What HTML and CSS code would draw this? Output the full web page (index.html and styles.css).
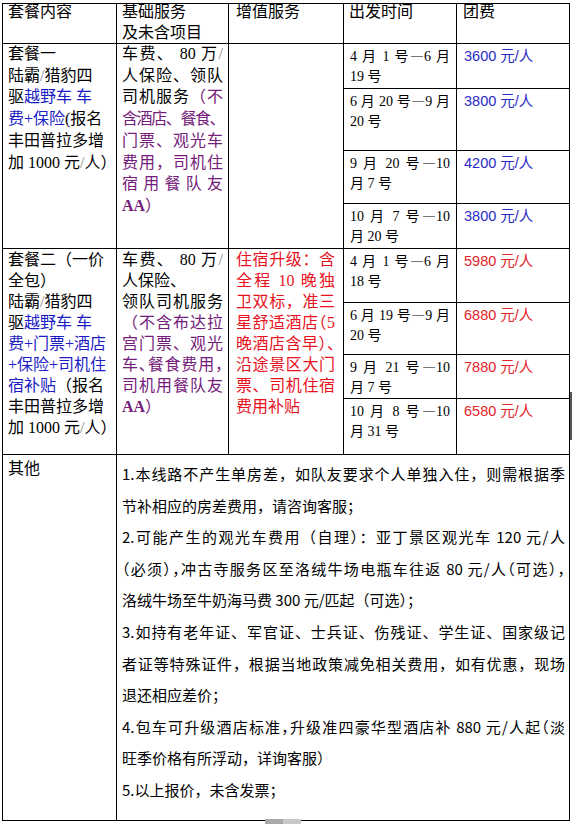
FILE: index.html
```html
<!DOCTYPE html>
<html lang="zh-CN">
<head>
<meta charset="utf-8">
<title>套餐价格表</title>
<link rel="stylesheet" href="styles.css">
</head>
<body>
<div class="page">
<table class="plan">
  <colgroup>
    <col class="c1"><col class="c2"><col class="c3"><col class="c4"><col class="c5">
  </colgroup>
  <tr class="h-head">
    <td class="txt head"><span class="l">套餐内容</span></td>
    <td class="txt head"><span class="l">基础服务</span><span class="l">及未含项目</span></td>
    <td class="txt head pad3"><span class="l">增值服务</span></td>
    <td class="txt head"><span class="l">出发时间</span></td>
    <td class="txt head pad5"><span class="l">团费</span></td>
  </tr>

  <tr class="h45">
    <td class="txt r1" rowspan="4">
      <span class="l">套餐一</span>
      <span class="l">陆霸<span class="sl">/</span>猎豹四</span>
      <span class="l">驱<span class="blue">越野车 车</span></span>
      <span class="l"><span class="blue">费+保险</span>(报名</span>
      <span class="l">丰田普拉多增</span>
      <span class="l">加 1000 元<span class="sl">/</span>人）</span>
    </td>
    <td class="txt r1" rowspan="4">
      <span class="l j">车费、 80 万<span class="sl">/</span></span>
      <span class="l j">人保险、领队</span>
      <span class="l j">司机服务<span class="purple">（不</span></span>
      <span class="l purple tight">含酒店、餐食、</span>
      <span class="l j purple">门票、观光车</span>
      <span class="l j purple">费用，司机住</span>
      <span class="l j purple">宿用餐队友</span>
      <span class="l purple"><b class="aa">AA</b>）</span>
    </td>
    <td class="txt pad3" rowspan="4"></td>
    <td class="date"><span class="l j">4 月 1 号<span class="dash">—</span>6 月</span><span class="l">19 号</span></td>
    <td class="price blue2">3600 元/人</td>
  </tr>
  <tr class="h62">
    <td class="date"><span class="l j">6 月 20 号<span class="dash">—</span>9 月</span><span class="l">20 号</span></td>
    <td class="price blue2">3800 元/人</td>
  </tr>
  <tr class="h53">
    <td class="date"><span class="l j">9 月 20 号<span class="dash">—</span>10</span><span class="l">月 7 号</span></td>
    <td class="price blue2">4200 元/人</td>
  </tr>
  <tr class="h45">
    <td class="date"><span class="l j">10 月 7 号<span class="dash">—</span>10</span><span class="l">月 20 号</span></td>
    <td class="price blue2">3800 元/人</td>
  </tr>

  <tr class="h54">
    <td class="txt r2" rowspan="4">
      <span class="l">套餐二（一价</span>
      <span class="l">全包）</span>
      <span class="l">陆霸<span class="sl">/</span>猎豹四</span>
      <span class="l">驱<span class="blue">越野车 车</span></span>
      <span class="l blue">费+门票+酒店</span>
      <span class="l blue">+保险+司机住</span>
      <span class="l"><span class="blue">宿补贴</span>（报名</span>
      <span class="l">丰田普拉多增</span>
      <span class="l">加 1000 元<span class="sl">/</span>人）</span>
    </td>
    <td class="txt r2" rowspan="4">
      <span class="l j">车费、 80 万<span class="sl">/</span></span>
      <span class="l">人保险、</span>
      <span class="l j">领队司机服务</span>
      <span class="l j purple">（不含布达拉</span>
      <span class="l j purple">宫门票、观光</span>
      <span class="l j purple halt">车、餐食费用，</span>
      <span class="l j purple">司机用餐队友</span>
      <span class="l purple"><b class="aa">AA</b>）</span>
    </td>
    <td class="txt r2 pad3 red" rowspan="4">
      <span class="l j">住宿升级：含</span>
      <span class="l j">全程 10 晚独</span>
      <span class="l j">卫双标，准三</span>
      <span class="l j halt">星舒适酒店（5</span>
      <span class="l j halt">晚酒店含早）、</span>
      <span class="l j">沿途景区大门</span>
      <span class="l j">票、司机住宿</span>
      <span class="l">费用补贴</span>
    </td>
    <td class="date"><span class="l j">4 月 1 号<span class="dash">—</span>6 月</span><span class="l">18 号</span></td>
    <td class="price red2">5980 元/人</td>
  </tr>
  <tr class="h52">
    <td class="date"><span class="l j">6 月 19 号<span class="dash">—</span>9 月</span><span class="l">20 号</span></td>
    <td class="price red2">6880 元/人</td>
  </tr>
  <tr class="h42">
    <td class="date"><span class="l j">9 月 21 号<span class="dash">—</span>10</span><span class="l">月 7 号</span></td>
    <td class="price red2">7880 元/人</td>
  </tr>
  <tr class="h56">
    <td class="date"><span class="l j">10 月 8 号<span class="dash">—</span>10</span><span class="l">月 31 号</span></td>
    <td class="price red2">6580 元/人</td>
  </tr>

  <tr class="h-other">
    <td class="txt other-label"><span class="l">其他</span></td>
    <td class="notes" colspan="4">
      <span class="l j">1.本线路不产生单房差，如队友要求个人单独入住，则需根据季</span>
      <span class="l">节补相应的房差费用，请咨询客服；</span>
      <span class="l j">2.可能产生的观光车费用（自理）：亚丁景区观光车 120 元/人</span>
      <span class="l j halt">（必须），冲古寺服务区至洛绒牛场电瓶车往返 80 元/人（可选），</span>
      <span class="l">洛绒牛场至牛奶海马费 300 元/匹起（可选）；</span>
      <span class="l j">3.如持有老年证、军官证、士兵证、伤残证、学生证、国家级记</span>
      <span class="l j">者证等特殊证件，根据当地政策减免相关费用，如有优惠，现场</span>
      <span class="l">退还相应差价；</span>
      <span class="l j halt">4.包车可升级酒店标准，升级准四豪华型酒店补 880 元/人起（淡</span>
      <span class="l">旺季价格有所浮动，详询客服）</span>
      <span class="l">5.以上报价，未含发票；</span>
    </td>
  </tr>
</table>
</div>
<div class="scroll-right"></div>
<div class="scroll-bottom"><span></span><span></span></div>
</body>
</html>
```

FILE: styles.css
```css
html, body {
  margin: 0;
  padding: 0;
  background: #fff;
}
body {
  font-family: "Liberation Serif", "Noto Sans CJK SC", serif;
  color: #000;
  position: relative;
  width: 572px;
  height: 824px;
  overflow: hidden;
}
.page {
  padding: 3px 0 0 2px;
}
.plan {
  border-collapse: collapse;
  table-layout: fixed;
  width: 567px;
}
.c1 { width: 114px; }
.c2 { width: 112px; }
.c3 { width: 115px; }
.c4 { width: 113px; }
.c5 { width: 113px; }

.plan td {
  border: 1px solid #000;
  vertical-align: top;
  padding: 0 5px;
}
.plan td.pad3 { padding: 0 8px 0 7px; }
.plan td.pad5 { padding-left: 6px; }

.h-head { height: 40px; }
.h45 { height: 45px; }
.h62 { height: 62px; }
.h53 { height: 53px; }
.h54 { height: 54px; }
.h52 { height: 52px; }
.h42 { height: 42px; }
.h56 { height: 56px; }
.h-other { height: 366px; }

.l { display: block; white-space: nowrap; }
.j { white-space: normal; text-align: justify; text-align-last: justify; }

.txt {
  font-size: 16px;
  line-height: 21.7px;
}
.head { line-height: 20.5px; }
.head .l:first-child { margin-top: -2px; }
.r1 .l:first-child { margin-top: -1px; }
.r2 { line-height: 21px; }
.r2 .l:first-child { margin-top: 0; }

.blue { color: #1c1cc4; }
.purple { color: #74207a; }
.red { color: #e8121e; }
.sl { color: #8a8a8a; }
.aa { font-weight: bold; font-family: "Liberation Serif", serif; }
.tight { letter-spacing: -1.4px; }
.halt { font-feature-settings: "halt"; }

.plan td.date {
  font-size: 14px;
  line-height: 20px;
  padding: 3px 6px 0 6px;
}
.dash {
  font-family: "Noto Sans CJK SC", sans-serif;
  line-height: 0;
}
.plan td.price {
  font-family: "Liberation Sans", "Noto Sans CJK SC", sans-serif;
  font-size: 14.5px;
  line-height: 20px;
  padding: 2px 5px 0 7px;
}
.blue2 { color: #2a2ac8; }
.red2 { color: #e4232b; }

.other-label .l { margin-top: 3px; }
.plan td.notes {
  font-family: "Noto Sans CJK SC", sans-serif;
  font-size: 15px;
  line-height: 31.6px;
  padding: 3px 4px 0 5px;
}

.scroll-right {
  position: absolute;
  left: 570px;
  top: 392px;
  width: 2px;
  height: 48px;
  background: #555;
}
.scroll-bottom {
  position: absolute;
  left: 265px;
  top: 819px;
  display: flex;
}
.scroll-bottom span {
  display: block;
  width: 18px;
  height: 5px;
  background: #a9a9a9;
}
.scroll-bottom span + span {
  background: #c8c8c8;
}
```
